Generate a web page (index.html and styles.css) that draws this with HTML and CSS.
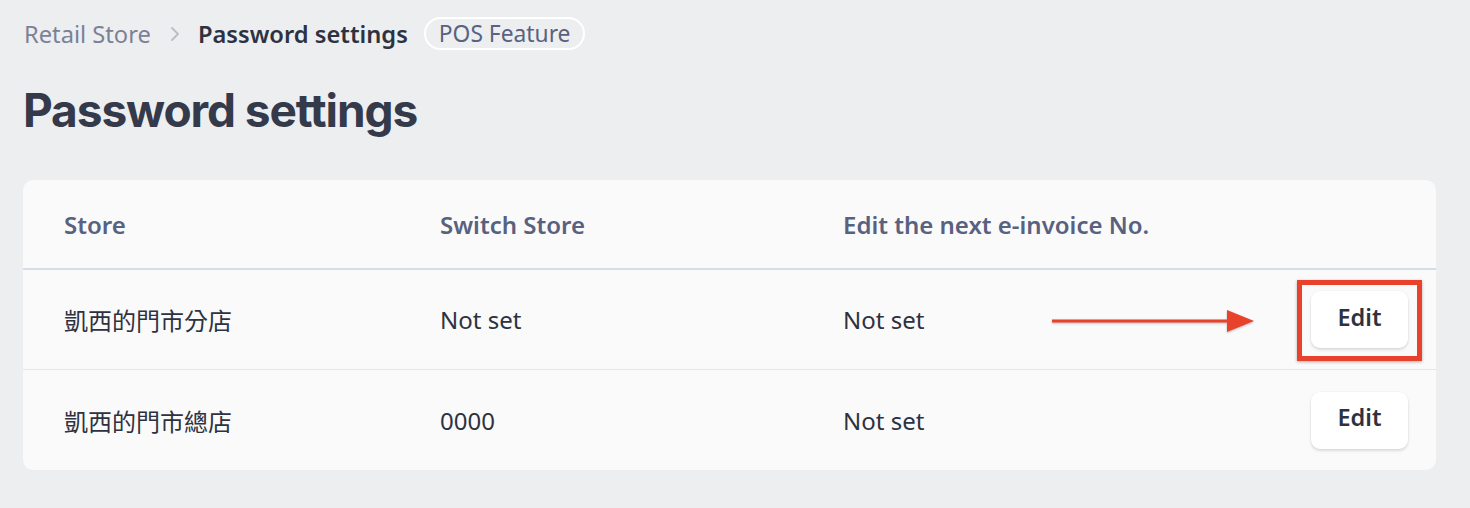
FILE: index.html
```html
<!DOCTYPE html>
<html lang="en">
<head>
<meta charset="utf-8">
<title>Password settings</title>
<link rel="stylesheet" href="styles.css">
</head>
<body>
<div class="page">
  <nav class="crumbs">
    <span class="crumb-link">Retail Store</span>
    <svg class="chev" width="14" height="18" viewBox="0 0 14 18"><path d="M4 3 L10 9 L4 15" fill="none" stroke="#b9bdc6" stroke-width="1.8" stroke-linecap="round" stroke-linejoin="round"/></svg>
    <span class="crumb-current">Password settings</span>
    <span class="pill">POS Feature</span>
  </nav>
  <h1 class="title">Password settings</h1>
  <div class="card">
    <div class="row head">
      <div class="c1">Store</div>
      <div class="c2">Switch Store</div>
      <div class="c3">Edit the next e-invoice No.</div>
      <div class="c4"></div>
    </div>
    <div class="row">
      <div class="c1 cjk">凱西的門市分店</div>
      <div class="c2">Not set</div>
      <div class="c3">Not set</div>
      <div class="c4">
        <svg class="arrow" width="206" height="30" viewBox="0 0 206 30"><line x1="2" y1="15" x2="182" y2="15" stroke="#e8412c" stroke-width="3"/><polygon points="177,4 204,15 177,26" fill="#e8412c"/></svg>
        <span class="highlight"><button class="btn">Edit</button></span>
      </div>
    </div>
    <div class="row last">
      <div class="c1 cjk">凱西的門市總店</div>
      <div class="c2">0000</div>
      <div class="c3">Not set</div>
      <div class="c4"><button class="btn">Edit</button></div>
    </div>
  </div>
</div>
</body>
</html>
```
FILE: styles.css
```css
* { box-sizing: border-box; }
html, body { margin: 0; padding: 0; }
body {
  background: #edeef0;
  font-family: "Noto Sans", "Open Sans", "Noto Sans CJK TC", sans-serif;
  color: #2e3240;
}
.page { padding: 16px 34px 0 23px; }
.crumbs {
  display: flex;
  align-items: center;
  height: 35px;
  font-size: 23.7px;
  padding-left: 1px;
}
.crumb-link { color: #7b8196; }
.chev { margin: 0 16px 0 17px; }
.crumb-current { color: #2e3240; font-weight: 600; letter-spacing: 0; }
.pill {
  margin-left: 16px;
  border: 2px solid #ffffff;
  border-radius: 18px;
  padding: 0 13px;
  height: 33px;
  display: flex;
  align-items: center;
  color: #596281;
  font-size: 22.8px;
}
.title {
  margin: 31px 0 0 0;
  font-family: "Inter", "Noto Sans", sans-serif;
  font-weight: 700;
  font-size: 46px;
  line-height: 56px;
  color: #353a4b;
  letter-spacing: -1.1px;
}
.card {
  margin-top: 42px;
  background: #fafafa;
  border-radius: 10px;
  width: 1413px;
}
.row {
  display: grid;
  grid-template-columns: 376px 403px 1fr 140px;
  align-items: center;
  height: 100px;
  padding: 0 28px 0 41px;
  border-bottom: 1px solid #e6e7ea;
  font-size: 24px;
  color: #2e3240;
}
.row.head {
  height: 90px;
  border-bottom: 2px solid #d6dde6;
  font-weight: 600;
  color: #586180;
}
.row.last { border-bottom: none; height: 100px; }
.cjk { font-family: "Noto Sans CJK TC", "Noto Sans", sans-serif; font-weight: 400; }
.c4 {
  display: flex;
  justify-content: flex-end;
  align-items: center;
  position: relative;
}
.arrow {
  position: absolute;
  right: 152px;
  top: 50%;
  margin-top: -14px;
  filter: drop-shadow(0 1px 1px rgba(0,0,0,0.25));
}
.btn {
  width: 97px;
  height: 57px;
  border: none;
  background: #ffffff;
  border-radius: 9px;
  box-shadow: 0 2px 3px rgba(0,0,0,0.12), 0 0 0 1px rgba(0,0,0,0.02);
  font-family: "Noto Sans", "Open Sans", sans-serif;
  font-weight: 600;
  font-size: 23.5px;
  color: #2e3240;
  padding: 0 0 6px 0;
}
.highlight {
  display: flex;
  padding: 6px 9px 8px 9px;
  margin: -11px -14px -13px 0;
  border: 5px solid #e8412c;
  box-shadow: 0 1px 3px rgba(0,0,0,0.3);
}
```
